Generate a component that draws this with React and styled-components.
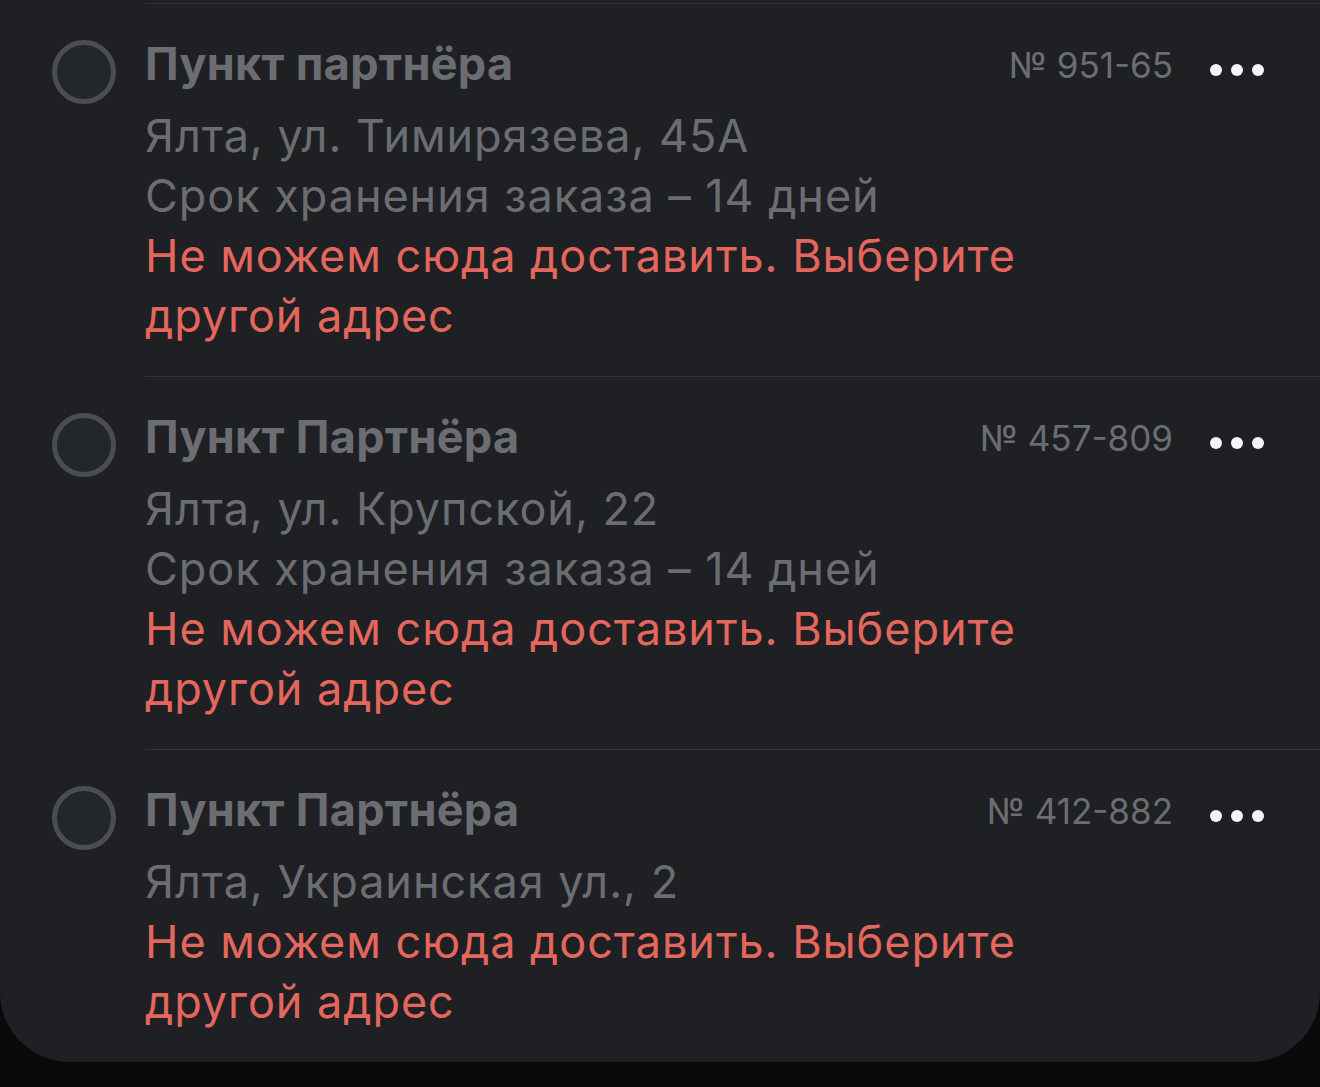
import React from 'react'
import styled, { createGlobalStyle } from 'styled-components'

const colors = {
  page: '#0a0a0b',
  card: '#1f2024',
  line: '#34353a',
  gray: '#6c6d71',
  red: '#e4675d',
  radio: '#4a4d52',
  radioFill: '#23262b',
  dot: '#f4f5fa',
}

const GlobalStyle = createGlobalStyle`
  html, body {
    margin: 0;
    padding: 0;
    background: ${colors.page};
  }
  body {
    font-family: Inter, "Noto Sans", sans-serif;
    -webkit-font-smoothing: antialiased;
  }
`

const Card = styled.div`
  width: 1320px;
  background: ${colors.card};
  border-radius: 0 0 70px 70px;
  padding-top: 3px;
`

const Item = styled.div`
  display: grid;
  grid-template-columns: 64px 1fr auto 56px;
  column-gap: 29px;
  padding: 0 56px 0 52px;
`

const Separator = styled.div`
  grid-column: 2 / -1;
  height: 1px;
  margin-right: -56px;
  background: ${colors.line};
`

const Radio = styled.div`
  grid-row: 2;
  box-sizing: border-box;
  width: 64px;
  height: 64px;
  margin-top: 36px;
  border-radius: 50%;
  border: 5px solid ${colors.radio};
  background: ${colors.radioFill};
`

const Body = styled.div`
  grid-row: 2;
  padding: 30px 0 30px;
  min-width: 0;
`

const Title = styled.div`
  font-weight: 700;
  font-size: 45px;
  line-height: 60px;
  color: ${colors.gray};
  margin-bottom: 12px;
  letter-spacing: 0.3px;
  white-space: nowrap;
`

const Line = styled.div`
  font-size: 45px;
  line-height: 60px;
  letter-spacing: 0.95px;
  white-space: nowrap;
  color: ${({ $alert }) => ($alert ? colors.red : colors.gray)};
`

const Number = styled.div`
  grid-row: 2;
  padding-top: 31px;
  margin-right: 6px;
  font-size: 35px;
  line-height: 60px;
  color: ${colors.gray};
  white-space: nowrap;
`

const Dots = styled.div`
  grid-row: 2;
  display: flex;
  align-items: center;
  justify-content: flex-end;
  gap: 9px;
  height: 60px;
  margin-top: 36px;
`

const Dot = styled.span`
  width: 12px;
  height: 12px;
  border-radius: 50%;
  background: ${colors.dot};
`

const points = [
  {
    title: 'Пункт партнёра',
    number: '№ 951-65',
    lines: ['Ялта, ул. Тимирязева, 45А', 'Срок хранения заказа – 14 дней'],
  },
  {
    title: 'Пункт Партнёра',
    number: '№ 457-809',
    lines: ['Ялта, ул. Крупской, 22', 'Срок хранения заказа – 14 дней'],
  },
  {
    title: 'Пункт Партнёра',
    number: '№ 412-882',
    lines: ['Ялта, Украинская ул., 2'],
  },
]

function PickupPoint({ point }) {
  return (
    <Item>
      <Separator />
      <Radio />
      <Body>
        <Title>{point.title}</Title>
        {point.lines.map((line) => (
          <Line key={line}>{line}</Line>
        ))}
        <Line $alert>Не можем сюда доставить. Выберите</Line>
        <Line $alert>другой адрес</Line>
      </Body>
      <Number>{point.number}</Number>
      <Dots>
        <Dot />
        <Dot />
        <Dot />
      </Dots>
    </Item>
  )
}

export default function App() {
  return (
    <>
      <GlobalStyle />
      <Card>
        {points.map((p) => (
          <PickupPoint key={p.number} point={p} />
        ))}
      </Card>
    </>
  )
}
